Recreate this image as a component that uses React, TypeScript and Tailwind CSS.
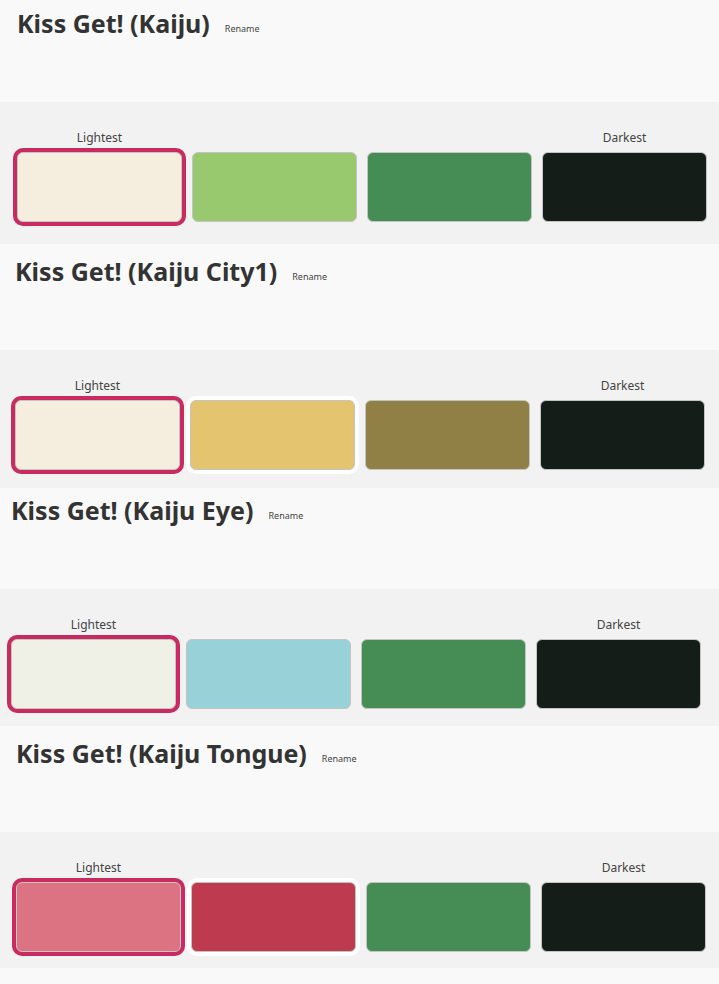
type Palette = {
  name: string;
  offset: string;
  titleBox: string;
  paletteBox: string;
  colors: string[];
  secondRing: boolean;
};

const palettes: Palette[] = [
  {
    name: "Kiss Get! (Kaiju)",
    offset: "pl-[17px]",
    titleBox: "h-[102px] pt-[7px]",
    paletteBox: "h-[142px]",
    colors: ["#f5eede", "#99c96f", "#468c55", "#151d18"],
    secondRing: false,
  },
  {
    name: "Kiss Get! (Kaiju City1)",
    offset: "pl-[15px]",
    titleBox: "h-[106px] pt-[11px]",
    paletteBox: "h-[138px]",
    colors: ["#f5eede", "#e4c46e", "#918046", "#151d18"],
    secondRing: true,
  },
  {
    name: "Kiss Get! (Kaiju Eye)",
    offset: "pl-[11px]",
    titleBox: "h-[101px] pt-[6px]",
    paletteBox: "h-[137px]",
    colors: ["#f0f1e6", "#99d1d9", "#468c55", "#151d18"],
    secondRing: false,
  },
  {
    name: "Kiss Get! (Kaiju Tongue)",
    offset: "pl-[16px]",
    titleBox: "h-[106px] pt-[11px]",
    paletteBox: "h-[136px]",
    colors: ["#db7383", "#be3a4e", "#468c55", "#151d18"],
    secondRing: true,
  },
];

function Swatch({ color, ring }: { color: string; ring: "pink" | "white" | "none" }) {
  const ringClass =
    ring === "pink" ? "ring-4 ring-[#c92a5f]" : ring === "white" ? "ring-4 ring-white" : "";
  return (
    <div
      className={`h-[70px] w-[165px] rounded-[6px] border border-[#c4c4c4] ${ringClass}`}
      style={{ backgroundColor: color }}
    />
  );
}

function PaletteBlock({ p }: { p: Palette }) {
  return (
    <section>
      <div className={`bg-[#f9f9f9] ${p.titleBox} ${p.offset}`}>
        <div className="flex items-center">
          <h2 className="text-[25px] font-bold leading-[32px] text-[#333333]">{p.name}</h2>
          <button className="ml-[15px] mt-[10px] text-[9px] leading-none text-[#444444]">Rename</button>
        </div>
      </div>
      <div className={`bg-[#f2f2f2] pt-[28px] ${p.paletteBox} ${p.offset}`}>
        <div className="grid w-max grid-cols-[165px_165px_165px_165px] gap-x-[10px]">
          <div className="text-center text-[12px] leading-[16px] text-[#444444]">Lightest</div>
          <div />
          <div />
          <div className="text-center text-[12px] leading-[16px] text-[#444444]">Darkest</div>
          <div className="col-span-4 mt-[6px] flex gap-x-[10px]">
            {p.colors.map((c, i) => (
              <Swatch
                key={i}
                color={c}
                ring={i === 0 ? "pink" : i === 1 && p.secondRing ? "white" : "none"}
              />
            ))}
          </div>
        </div>
      </div>
    </section>
  );
}

export default function App() {
  return (
    <div className="min-h-screen w-[719px] bg-[#f9f9f9] font-['Noto_Sans',sans-serif]">
      {palettes.map((p) => (
        <PaletteBlock key={p.name} p={p} />
      ))}
    </div>
  );
}
